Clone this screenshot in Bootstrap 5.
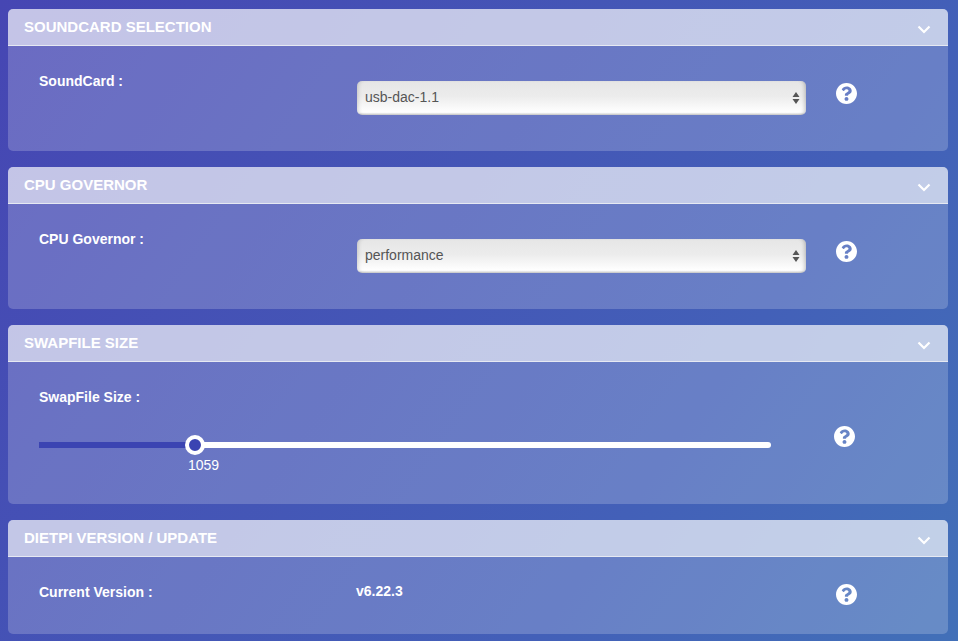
<!DOCTYPE html>
<html lang="en">
<head>
<meta charset="utf-8">
<title>DietPi settings</title>
<link href="https://cdn.jsdelivr.net/npm/bootstrap@5.3.0/dist/css/bootstrap.min.css" rel="stylesheet">
<style>
html, body { height: 100%; }
body {
  font-family: "Liberation Sans", Arial, sans-serif;
  font-size: 14px;
  color: #fff;
  background: linear-gradient(125deg, #4646b3 0%, #4360b8 70%, #4270b8 100%);
  padding: 9px 10px 0 8px;
  overflow: hidden;
}
.panel-box {
  background: rgba(255,255,255,.2);
  border: 0;
  border-radius: 5px;
  margin-bottom: 16px;
  color: #fff;
}
.panel-head {
  height: 37px;
  padding: 0 16px;
  background: rgba(255,255,255,.6);
  border: 0;
  border-bottom: 1px solid #e6e9f2;
  border-radius: 5px 5px 0 0 !important;
  font-size: 15px;
  font-weight: 700;
  color: #fff;
  text-transform: uppercase;
}
.panel-head svg { width: 14px; height: 10px; margin: 4px 1px 0 0; }
.panel-main { padding: 27px 0 0 31px; }
.h-a { height: 105px; }
.h-b { height: 142px; padding-top: 27px; }
.h-c { height: 77px; padding-top: 27px; }
.lbl { width: 318px; font-weight: 700; flex: none; line-height: 16px; }
.pick-wrap { width: 449px; flex: none; margin-top: 8px; }
select.pick {
  height: 34px;
  padding: 0 24px 2px 8px;
  font-size: 14px;
  color: #555;
  border: 0;
  border-radius: 5px;
  background-color: #eee;
  background-image:
    url("data:image/svg+xml,%3Csvg xmlns='http://www.w3.org/2000/svg' width='8' height='14'%3E%3Cpath fill='%23555' d='M4 1l3.5 5h-7zM4 13L.5 8h7z'/%3E%3C/svg%3E"),
    linear-gradient(to bottom, #e6e6e6 0%, #ececec 45%, #fff 92%, #c9c9c9 100%);
  background-repeat: no-repeat;
  background-position: right 6px center, 0 0;
  background-size: 8px 14px, 100% 100%;
  box-shadow: inset -4px 0 4px -3px rgba(0,0,0,.25), inset 4px 0 4px -3px rgba(0,0,0,.18);
}
.ask { width: 21px; height: 21px; fill: #fff; flex: none; display: block; }
.ask-b { margin: 10px 0 0 30px; }
.slide-wrap { width: 732px; flex: none; }
.slide-line { position: relative; height: 6px; margin-top: 37px; background: #fff; border-radius: 0 3px 3px 0; }
.slide-fill { height: 6px; width: 156px; background: #3b44b2; }
.slide-dot {
  position: absolute; left: 146px; top: -7px;
  width: 20px; height: 20px; border-radius: 50%;
  background: #3b44b2; border: 4px solid #fff;
}
.slide-val { width: 329px; text-align: center; line-height: 16px; margin-top: 9px; }
.ask-c { margin: 37px 0 0 63px; }
.ver { width: 449px; flex: none; font-weight: 700; color: #fff; margin-left: -1px; }
.ask-d { margin: 0 0 0 31px; }
</style>
</head>
<body>

<div class="card panel-box">
  <div class="card-header panel-head d-flex justify-content-between align-items-center">
    <span>SoundCard Selection</span>
    <svg viewBox="0 0 14 10"><path d="M1.5 2.5L7 8l5.5-5.5" fill="none" stroke="#fff" stroke-width="2.2"/></svg>
  </div>
  <div class="card-body panel-main h-a d-flex">
    <div class="lbl">SoundCard :</div>
    <div class="pick-wrap"><select class="form-select pick"><option>usb-dac-1.1</option></select></div>
    <svg class="ask ask-b" viewBox="8 8 496 496"><path fill-rule="evenodd" d="M504 256c0 136.997-111.043 248-248 248S8 392.997 8 256C8 119.083 119.043 8 256 8s248 111.083 248 248zM262.655 90c-54.497 0-89.255 22.957-116.549 63.758-3.536 5.286-2.353 12.415 2.715 16.258l34.699 26.31c5.205 3.947 12.621 3.008 16.665-2.122 17.864-22.658 30.113-35.797 57.303-35.797 20.429 0 45.698 13.148 45.698 32.958 0 14.976-12.363 22.667-32.534 33.976C247.128 238.528 216 254.941 216 296v4c0 6.627 5.373 12 12 12h56c6.627 0 12-5.373 12-12v-1.333c0-28.462 83.186-29.647 83.186-106.667 0-58.002-60.165-102-116.531-102zM256 338c-25.365 0-46 20.635-46 46 0 25.364 20.635 46 46 46s46-20.636 46-46c0-25.365-20.635-46-46-46z"/></svg>
  </div>
</div>

<div class="card panel-box">
  <div class="card-header panel-head d-flex justify-content-between align-items-center">
    <span>CPU Governor</span>
    <svg viewBox="0 0 14 10"><path d="M1.5 2.5L7 8l5.5-5.5" fill="none" stroke="#fff" stroke-width="2.2"/></svg>
  </div>
  <div class="card-body panel-main h-a d-flex">
    <div class="lbl">CPU Governor :</div>
    <div class="pick-wrap"><select class="form-select pick"><option>performance</option></select></div>
    <svg class="ask ask-b" viewBox="8 8 496 496"><path fill-rule="evenodd" d="M504 256c0 136.997-111.043 248-248 248S8 392.997 8 256C8 119.083 119.043 8 256 8s248 111.083 248 248zM262.655 90c-54.497 0-89.255 22.957-116.549 63.758-3.536 5.286-2.353 12.415 2.715 16.258l34.699 26.31c5.205 3.947 12.621 3.008 16.665-2.122 17.864-22.658 30.113-35.797 57.303-35.797 20.429 0 45.698 13.148 45.698 32.958 0 14.976-12.363 22.667-32.534 33.976C247.128 238.528 216 254.941 216 296v4c0 6.627 5.373 12 12 12h56c6.627 0 12-5.373 12-12v-1.333c0-28.462 83.186-29.647 83.186-106.667 0-58.002-60.165-102-116.531-102zM256 338c-25.365 0-46 20.635-46 46 0 25.364 20.635 46 46 46s46-20.636 46-46c0-25.365-20.635-46-46-46z"/></svg>
  </div>
</div>

<div class="card panel-box">
  <div class="card-header panel-head d-flex justify-content-between align-items-center">
    <span>SwapFile Size</span>
    <svg viewBox="0 0 14 10"><path d="M1.5 2.5L7 8l5.5-5.5" fill="none" stroke="#fff" stroke-width="2.2"/></svg>
  </div>
  <div class="card-body panel-main h-b d-flex">
    <div class="slide-wrap">
      <div class="lbl">SwapFile Size :</div>
      <div class="slide-line">
        <div class="slide-fill"></div>
        <div class="slide-dot"></div>
      </div>
      <div class="slide-val">1059</div>
    </div>
    <svg class="ask ask-c" viewBox="8 8 496 496"><path fill-rule="evenodd" d="M504 256c0 136.997-111.043 248-248 248S8 392.997 8 256C8 119.083 119.043 8 256 8s248 111.083 248 248zM262.655 90c-54.497 0-89.255 22.957-116.549 63.758-3.536 5.286-2.353 12.415 2.715 16.258l34.699 26.31c5.205 3.947 12.621 3.008 16.665-2.122 17.864-22.658 30.113-35.797 57.303-35.797 20.429 0 45.698 13.148 45.698 32.958 0 14.976-12.363 22.667-32.534 33.976C247.128 238.528 216 254.941 216 296v4c0 6.627 5.373 12 12 12h56c6.627 0 12-5.373 12-12v-1.333c0-28.462 83.186-29.647 83.186-106.667 0-58.002-60.165-102-116.531-102zM256 338c-25.365 0-46 20.635-46 46 0 25.364 20.635 46 46 46s46-20.636 46-46c0-25.365-20.635-46-46-46z"/></svg>
  </div>
</div>

<div class="card panel-box">
  <div class="card-header panel-head d-flex justify-content-between align-items-center">
    <span>DietPi Version / Update</span>
    <svg viewBox="0 0 14 10"><path d="M1.5 2.5L7 8l5.5-5.5" fill="none" stroke="#fff" stroke-width="2.2"/></svg>
  </div>
  <div class="card-body panel-main h-c d-flex">
    <div class="lbl">Current Version :</div>
    <div class="ver lh-1">v6.22.3</div>
    <svg class="ask ask-d" viewBox="8 8 496 496"><path fill-rule="evenodd" d="M504 256c0 136.997-111.043 248-248 248S8 392.997 8 256C8 119.083 119.043 8 256 8s248 111.083 248 248zM262.655 90c-54.497 0-89.255 22.957-116.549 63.758-3.536 5.286-2.353 12.415 2.715 16.258l34.699 26.31c5.205 3.947 12.621 3.008 16.665-2.122 17.864-22.658 30.113-35.797 57.303-35.797 20.429 0 45.698 13.148 45.698 32.958 0 14.976-12.363 22.667-32.534 33.976C247.128 238.528 216 254.941 216 296v4c0 6.627 5.373 12 12 12h56c6.627 0 12-5.373 12-12v-1.333c0-28.462 83.186-29.647 83.186-106.667 0-58.002-60.165-102-116.531-102zM256 338c-25.365 0-46 20.635-46 46 0 25.364 20.635 46 46 46s46-20.636 46-46c0-25.365-20.635-46-46-46z"/></svg>
  </div>
</div>

<script src="https://cdn.jsdelivr.net/npm/bootstrap@5.3.0/dist/js/bootstrap.bundle.min.js"></script>
</body>
</html>
